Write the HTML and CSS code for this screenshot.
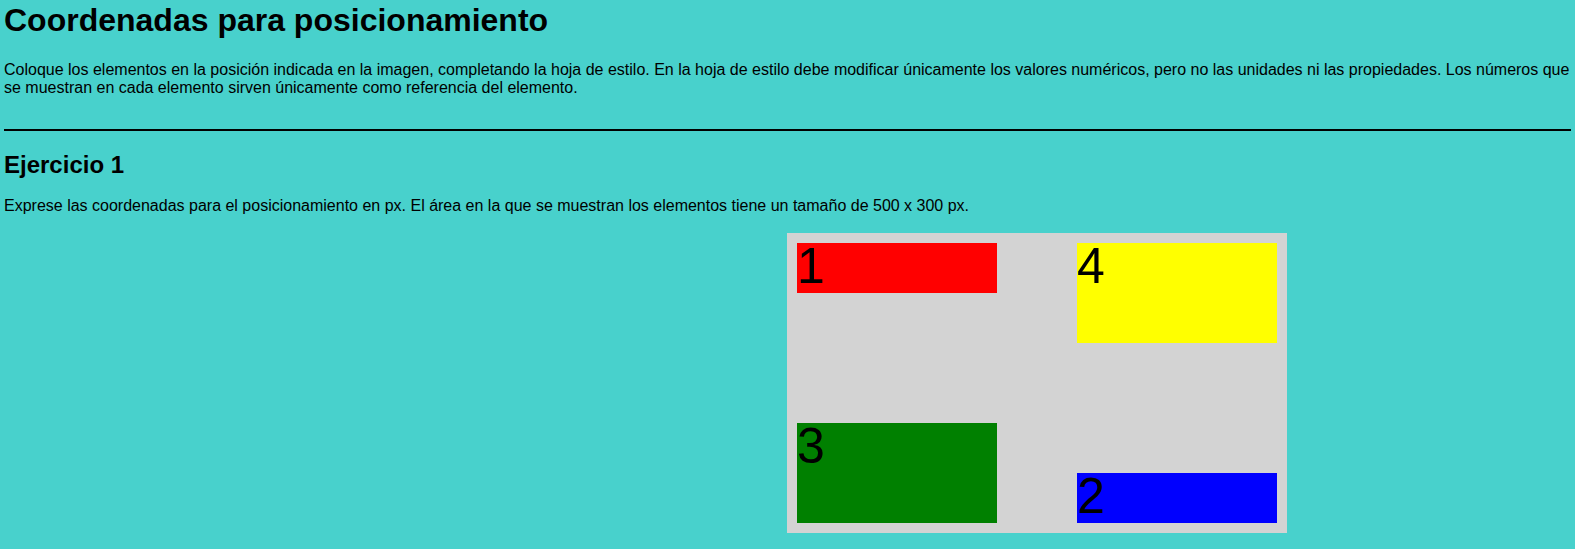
FILE: index.html
```html
<!DOCTYPE html>
<html lang="es">
<head>
<meta charset="utf-8">
<title>Coordenadas para posicionamiento</title>
<link rel="stylesheet" href="styles.css">
</head>
<body>
<h1 class="title">Coordenadas para posicionamiento</h1>
<p class="intro">Coloque los elementos en la posición indicada en la imagen, completando la hoja de estilo. En la hoja de estilo debe modificar únicamente los valores numéricos, pero no las unidades ni las propiedades. Los números que se muestran en cada elemento sirven únicamente como referencia del elemento.</p>
<hr class="rule">
<h2 class="exercise">Ejercicio 1</h2>
<p class="statement">Exprese las coordenadas para el posicionamiento en px. El área en la que se muestran los elementos tiene un tamaño de 500 x 300 px.</p>
<div class="area">
  <div class="item item-1">1</div>
  <div class="item item-2">2</div>
  <div class="item item-3">3</div>
  <div class="item item-4">4</div>
</div>
</body>
</html>
```
FILE: styles.css
```css
html {
  background: #48d1cc;
}
body {
  margin: 0 4px;
  padding-top: 2px;
  font-family: "Liberation Sans", Arial, sans-serif;
  font-size: 16px;
  color: #000;
}
.title {
  font-size: 32px;
  font-weight: bold;
  margin: 0 0 21.5px;
}
.intro {
  margin: 0;
}
.rule {
  height: 0;
  border: 0;
  border-top: 2px solid #000;
  margin: 32px 0 0;
}
.exercise {
  font-size: 24px;
  font-weight: bold;
  margin: 20px 0 18px;
}
.statement {
  margin: 0 0 18px;
}
.area {
  position: relative;
  width: 500px;
  height: 300px;
  margin-left: calc(50% - 0.5px);
  background: #d3d3d3;
}
.item {
  position: absolute;
  width: 200px;
  font-size: 50px;
  line-height: 46px;
}
.item-1 {
  left: 10px;
  top: 10px;
  height: 50px;
  background: #ff0000;
}
.item-2 {
  left: 290px;
  top: 240px;
  height: 50px;
  background: #0000ff;
}
.item-3 {
  left: 10px;
  top: 190px;
  height: 100px;
  background: #008000;
}
.item-4 {
  left: 290px;
  top: 10px;
  height: 100px;
  background: #ffff00;
}
```
